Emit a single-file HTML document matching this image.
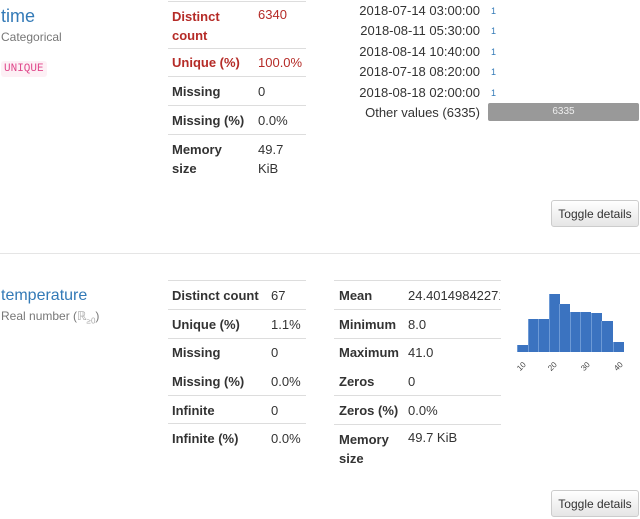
<!DOCTYPE html>
<html><head><meta charset="utf-8"><style>
body{margin:0;width:640px;height:519px;overflow:hidden;background:#fff;font-family:"Liberation Sans",sans-serif;color:#333;position:relative;font-size:13px}
.a{position:absolute;white-space:nowrap}
.b{font-weight:bold;color:#333}
.r{color:#b52b27}
.rb{font-weight:bold;color:#b52b27}
.l{position:absolute;height:1px;background:#ddd}
.btn{position:absolute;width:88px;height:27px;border:1px solid #ccc;border-radius:3px;background:linear-gradient(#fff,#e6e6e6);font-size:12px;color:#333;text-align:center;line-height:26px;box-sizing:border-box}
.bar{position:absolute;background:#3b73c0;border-left:1px solid #6d9ad6}
</style></head><body>
<div class="a" style="left:1px;top:6px;font-size:18px;color:#337ab7">time</div>
<div class="a" style="left:1px;top:30px;font-size:12px;color:#777">Categorical</div>
<div class="a" style="left:1px;top:61px;font-family:'Liberation Mono',monospace;font-size:11px;color:#e0468a;background:#fdf0f5;padding:2px 3px;border-radius:3px">UNIQUE</div>

<div class="l" style="left:168px;top:1px;width:138px"></div>
<div class="a rb" style="left:172px;top:7px;line-height:19px">Distinct<br>count</div>
<div class="a r" style="left:258px;top:7px">6340</div>
<div class="l" style="left:168px;top:48px;width:138px"></div>
<div class="a rb" style="left:172px;top:55px">Unique (%)</div>
<div class="a r" style="left:258px;top:55px">100.0%</div>
<div class="l" style="left:168px;top:76px;width:138px"></div>
<div class="a b" style="left:172px;top:84px">Missing</div>
<div class="a" style="left:258px;top:84px">0</div>
<div class="l" style="left:168px;top:105px;width:138px"></div>
<div class="a b" style="left:172px;top:113px">Missing (%)</div>
<div class="a" style="left:258px;top:113px">0.0%</div>
<div class="l" style="left:168px;top:134px;width:138px"></div>
<div class="a b" style="left:172px;top:140px;line-height:19px">Memory<br>size</div>
<div class="a" style="left:258px;top:140px;line-height:19px">49.7<br>KiB</div>

<div class="a" style="right:160px;top:1px;text-align:right;line-height:20.4px">2018-07-14 03:00:00<br>2018-08-11 05:30:00<br>2018-08-14 10:40:00<br>2018-07-18 08:20:00<br>2018-08-18 02:00:00<br>Other values (6335)</div>
<div class="a" style="left:491px;top:1px;font-size:9px;color:#337ab7;line-height:20.4px">1<br>1<br>1<br>1<br>1</div>
<div class="a" style="left:488px;top:103px;width:151px;height:18px;background:#999;border-radius:2px;color:#eee;font-size:10px;text-align:center;line-height:18px">6335</div>

<div class="btn" style="left:551px;top:200px">Toggle details</div>
<div class="l" style="left:0;top:253px;width:640px;background:#e5e5e5"></div>

<div class="a" style="left:1px;top:287px;font-size:16px;color:#337ab7">temperature</div>
<div class="a" style="left:1px;top:309px;font-size:12px;color:#777">Real number (<span style="color:#aaa">ℝ<sub style="font-size:8px">≥0</sub></span>)</div>

<div class="l" style="left:168px;top:280px;width:138px"></div>
<div class="a b" style="left:172px;top:288px">Distinct count</div>
<div class="a" style="left:271px;top:288px">67</div>
<div class="l" style="left:168px;top:309px;width:138px"></div>
<div class="a b" style="left:172px;top:317px">Unique (%)</div>
<div class="a" style="left:271px;top:317px">1.1%</div>
<div class="l" style="left:168px;top:338px;width:138px"></div>
<div class="a b" style="left:172px;top:345px">Missing</div>
<div class="a" style="left:271px;top:345px">0</div>
<div class="a b" style="left:172px;top:374px">Missing (%)</div>
<div class="a" style="left:271px;top:374px">0.0%</div>
<div class="l" style="left:168px;top:395px;width:138px"></div>
<div class="a b" style="left:172px;top:403px">Infinite</div>
<div class="a" style="left:271px;top:403px">0</div>
<div class="l" style="left:168px;top:423px;width:138px"></div>
<div class="a b" style="left:172px;top:431px">Infinite (%)</div>
<div class="a" style="left:271px;top:431px">0.0%</div>

<div class="l" style="left:334px;top:280px;width:167px"></div>
<div class="a b" style="left:339px;top:288px">Mean</div>
<div class="a" style="left:408px;top:288px;width:92px;overflow:hidden">24.4014984227129</div>
<div class="l" style="left:334px;top:309px;width:167px"></div>
<div class="a b" style="left:339px;top:317px">Minimum</div>
<div class="a" style="left:408px;top:317px">8.0</div>
<div class="l" style="left:334px;top:338px;width:167px"></div>
<div class="a b" style="left:339px;top:345px">Maximum</div>
<div class="a" style="left:408px;top:345px">41.0</div>
<div class="a b" style="left:339px;top:374px">Zeros</div>
<div class="a" style="left:408px;top:374px">0</div>
<div class="l" style="left:334px;top:395px;width:167px"></div>
<div class="a b" style="left:339px;top:403px">Zeros (%)</div>
<div class="a" style="left:408px;top:403px">0.0%</div>
<div class="l" style="left:334px;top:424px;width:167px"></div>
<div class="a b" style="left:339px;top:430px;line-height:19px">Memory<br>size</div>
<div class="a" style="left:408px;top:430px">49.7 KiB</div>

<div class="bar" style="left:517px;top:345px;width:10px;height:7px"></div>
<div class="bar" style="left:528px;top:319px;width:10px;height:33px"></div>
<div class="bar" style="left:538px;top:319px;width:10px;height:33px"></div>
<div class="bar" style="left:549px;top:294px;width:10px;height:58px"></div>
<div class="bar" style="left:559px;top:304px;width:10px;height:48px"></div>
<div class="bar" style="left:570px;top:312px;width:10px;height:40px"></div>
<div class="bar" style="left:580px;top:312px;width:10px;height:40px"></div>
<div class="bar" style="left:591px;top:313px;width:10px;height:39px"></div>
<div class="bar" style="left:601px;top:321px;width:11px;height:31px"></div>
<div class="bar" style="left:613px;top:342px;width:10px;height:10px"></div>
<div class="a" style="left:517px;top:362px;font-size:8px;color:#444;transform:rotate(-45deg)">10</div>
<div class="a" style="left:548px;top:362px;font-size:8px;color:#444;transform:rotate(-45deg)">20</div>
<div class="a" style="left:581px;top:362px;font-size:8px;color:#444;transform:rotate(-45deg)">30</div>
<div class="a" style="left:614px;top:362px;font-size:8px;color:#444;transform:rotate(-45deg)">40</div>

<div class="btn" style="left:551px;top:490px">Toggle details</div>
</body></html>
